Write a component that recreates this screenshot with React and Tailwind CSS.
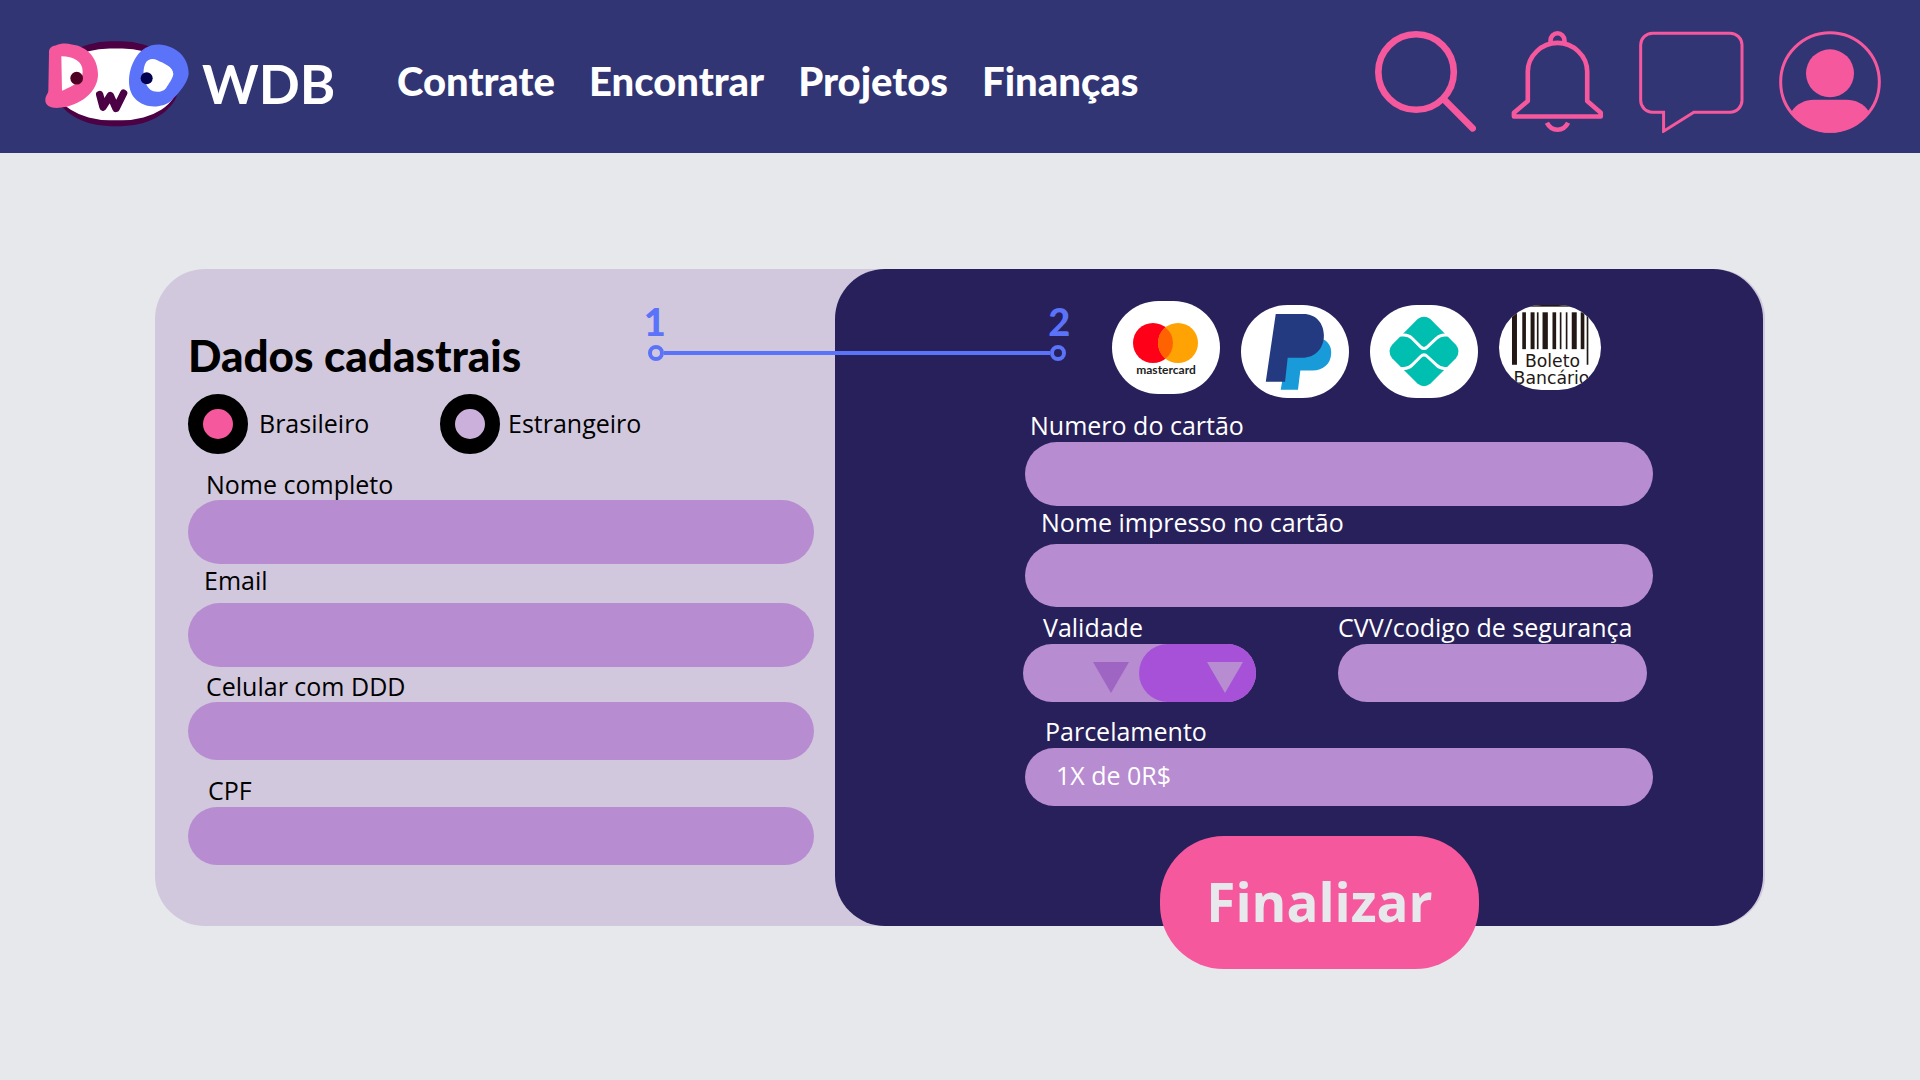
import React from "react";

const INPUT =
  "block w-full rounded-full border-0 bg-[#b78cd1] px-8 text-[25px] outline-none focus:ring-2 focus:ring-[#5a73f8]";

function LogoMark() {
  return (
    <svg viewBox="45 60 435 260" className="h-[87px] w-[145px] shrink-0" aria-hidden="true">
      <rect x="68" y="63" width="380" height="255" rx="175" ry="127" fill="#4b0143" />
      <rect x="74" y="85" width="368" height="215" rx="165" ry="107" fill="#fff" />
      <path fill="#fff" d="M80 100H150L170 140V190L90 220H80Z" />
      <path
        fillRule="evenodd"
        fill="#f6589d"
        d="M57 98C57 84 63 78 77 76C95 68 112 70 125 73C172 78 204 115 204 163C204 215 150 258 88 263C62 265 46 256 46 240C46 227 54 222 55 212ZM94 108C132 108 158 124 158 153C158 186 128 196 96 212Z"
      />
      <circle cx="140" cy="174" r="19" fill="#4f0025" />
      <path
        fillRule="evenodd"
        fill="#5a73f8"
        d="M390 73C440 78 476 112 476 160C474 190 440 226 425 240C400 264 345 268 315 235C288 205 293 148 320 108C335 86 360 71 390 73ZM345 132C352 116 368 113 382 120C400 129 430 138 430 162C426 180 416 190 408 204C396 218 372 217 361 209C340 190 336 155 345 132Z"
      />
      <circle cx="350" cy="174" r="18" fill="#02004f" />
      <path
        d="M209 223L219 261L241 226L258 265L281 219"
        fill="none"
        stroke="#4b0143"
        strokeWidth="22"
        strokeLinecap="round"
        strokeLinejoin="round"
      />
    </svg>
  );
}

function SearchIcon() {
  return (
    <svg viewBox="47 32 305 305" className="h-[101px] w-[101px]" fill="none" stroke="#f6589d" strokeWidth="20" aria-hidden="true">
      <circle cx="171" cy="156" r="114" />
      <path d="M256 239L342 326" strokeLinecap="round" />
    </svg>
  );
}

function BellIcon() {
  return (
    <svg viewBox="452 31 280 306" className="h-[101px] w-[93px]" fill="none" stroke="#f6589d" strokeWidth="14" aria-hidden="true">
      <path d="M571 66V59A21 21 0 0 1 613 59V66" />
      <path
        d="M592 67C544 67 502 106 502 154V243L460 279V290H723V279L682 243V154C682 106 640 67 592 67Z"
        strokeLinejoin="round"
      />
      <path d="M560 309C574 337 610 337 624 309" />
    </svg>
  );
}

function ChatIcon() {
  return (
    <svg viewBox="57 30 316 306" className="h-[102px] w-[105px]" fill="none" stroke="#f6589d" strokeWidth="9" aria-hidden="true">
      <path d="M98 36H331A36 36 0 0 1 367 72V237A36 36 0 0 1 331 274H222L131 331V274H98A36 36 0 0 1 62 237V72A36 36 0 0 1 98 36Z" />
    </svg>
  );
}

function AvatarIcon() {
  return (
    <svg viewBox="476 31 306 306" className="h-[102px] w-[102px]" aria-hidden="true">
      <circle cx="629" cy="184" r="148" fill="none" stroke="#f6589d" strokeWidth="9" />
      <circle cx="629" cy="158" r="72" fill="#f6589d" />
      <path d="M513 273C530 248 555 237 580 237H678C705 237 730 248 746 273C718 312 675 336 629 336C583 336 540 312 513 273Z" fill="#f6589d" />
    </svg>
  );
}

function MastercardLogo() {
  return (
    <svg viewBox="0 0 108 93" className="h-[93px] w-[108px]" aria-hidden="true">
      <circle cx="41" cy="42" r="20" fill="#ff0019" />
      <circle cx="66" cy="42" r="20" fill="#ffa203" />
      <path d="M53.5 26.4A20 20 0 0 1 53.5 57.6A20 20 0 0 1 53.5 26.4Z" fill="#ff6200" />
      <text x="54" y="73" textAnchor="middle" fontFamily="Lato, sans-serif" fontWeight="700" fontSize="12" fill="#222">
        mastercard
      </text>
    </svg>
  );
}

function PaypalLogo() {
  return (
    <svg viewBox="420 43 324 280" className="h-[93px] w-[108px]" aria-hidden="true">
      <path d="M566 140H650C678 146 692 164 691 188C690 220 667 240 635 240H598L591 298H539Z" fill="#189bd8" />
      <path d="M524 70H608C645 70 669 98 669 135C669 175 642 202 604 202H560L552 274H494Z" fill="#233a80" />
    </svg>
  );
}

function PixLogo() {
  return (
    <svg viewBox="34 44 324 280" className="h-[93px] w-[108px]" aria-hidden="true">
      <path
        d="M177 86Q196 72 215 86L292 164Q308 184 292 204L215 281Q196 296 177 281L100 204Q84 184 100 164Z"
        fill="#00beb0"
      />
      <path
        d="M112 134H136Q150 134 160 144L186 170Q196 180 206 170L234 144Q244 134 258 134H280M112 235H136Q150 235 160 225L186 199Q196 189 206 199L234 225Q244 235 258 235H280"
        fill="none"
        stroke="#fff"
        strokeWidth="9"
      />
    </svg>
  );
}

const BARS = [
  [453, 15, 158],
  [484, 11, 111],
  [509, 12, 111],
  [528, 5, 111],
  [545, 16, 111],
  [575, 11, 111],
  [597, 5, 111],
  [615, 5, 111],
  [633, 15, 111],
  [660, 11, 111],
  [678, 5, 158],
];

function BoletoLogo() {
  return (
    <svg viewBox="414 42 307 256" className="h-[85px] w-[102px]" aria-hidden="true">
      <rect x="414" y="42" width="307" height="5" fill="#231815" />
      {BARS.map(([x, w, h]) => (
        <rect key={x} x={x} y="64" width={w} height={h} fill="#231815" />
      ))}
      <text x="575" y="230" textAnchor="middle" fontFamily="DejaVu Sans, sans-serif" fontSize="52" fill="#231815">
        Boleto
      </text>
      <text x="572" y="279" textAnchor="middle" fontFamily="DejaVu Sans, sans-serif" fontSize="52" fill="#231815">
        Bancário
      </text>
    </svg>
  );
}

function Field({ id, label, className = "", labelClass = "", inputClass = "", type = "text" }) {
  return (
    <div className={className}>
      <label htmlFor={id} className={"block text-[25px] leading-8 " + labelClass}>
        {label}
      </label>
      <input id={id} type={type} className={INPUT + " " + inputClass} />
    </div>
  );
}

function Nationality({ value, label, gap, defaultChecked }) {
  return (
    <label className={"flex items-center text-[25px] leading-8 " + gap}>
      <input
        type="radio"
        name="nacionalidade"
        value={value}
        defaultChecked={defaultChecked}
        className="size-[60px] shrink-0 appearance-none rounded-full border-[15px] border-black bg-[#cbb0db] checked:bg-[#f6589d]"
      />
      <span className="pb-0.5">{label}</span>
    </label>
  );
}

function Payment({ name, className, children }) {
  return (
    <button type="button" aria-label={name} className={"shrink-0 overflow-hidden rounded-[48px] bg-white " + className}>
      {children}
    </button>
  );
}

function Triangle({ className }) {
  return (
    <svg viewBox="0 0 36 31" className={"pointer-events-none absolute top-[18px] h-[31px] w-9 " + className} aria-hidden="true">
      <path d="M0 0H36L18 31Z" fill="currentColor" />
    </svg>
  );
}

function Stepper() {
  return (
    <div className="absolute left-[30.6%] top-[31px] w-[26%] text-[#5a73f8]" aria-label="Etapas">
      <div className="-ml-1 -mr-1 flex justify-between pb-[3px] font-['Lato'] text-[38px] font-black leading-[42px]">
        <span>1</span>
        <span>2</span>
      </div>
      <div className="flex items-center">
        <span className="size-4 rounded-full border-4 border-[#5a73f8]" />
        <span className="h-1 flex-1 bg-[#5a73f8]" />
        <span className="size-4 rounded-full border-4 border-[#5a73f8]" />
      </div>
    </div>
  );
}

export default function App() {
  return (
    <div className="min-h-screen bg-[#e6e8eb] font-['Open_Sans',sans-serif] text-black">
      <header className="flex h-[153px] items-center bg-[#313574] pl-[45px] pr-[39px]">
        <a href="#inicio" className="flex items-center gap-3 pt-[14px] text-white">
          <LogoMark />
          <span className="w-[130px] font-['Lato',sans-serif] text-[54px] font-bold leading-[64px]">WDB</span>
        </a>
        <nav className="ml-[65px] flex gap-[34px] pt-2 font-['Lato',sans-serif] text-[40px] font-black leading-[48px] text-white">
          <a href="#contrate">Contrate</a>
          <a href="#encontrar">Encontrar</a>
          <a href="#projetos">Projetos</a>
          <a href="#financas">Finanças</a>
        </nav>
        <div className="ml-auto flex items-center gap-[35px] pt-[10px]">
          <button type="button" aria-label="Buscar">
            <SearchIcon />
          </button>
          <button type="button" aria-label="Notificações">
            <BellIcon />
          </button>
          <button type="button" aria-label="Mensagens">
            <ChatIcon />
          </button>
          <button type="button" aria-label="Perfil">
            <AvatarIcon />
          </button>
        </div>
      </header>

      <main className="px-[155px] pb-[110px] pt-[116px]">
        <form
          onSubmit={(e) => e.preventDefault()}
          className="relative grid grid-cols-[680fr_928fr] rounded-[50px] bg-[#d1c8dd] pr-0.5"
        >
          <section className="pb-[61px] pl-[33px] pr-[21px] pt-[58px]">
            <h1 className="font-['Lato',sans-serif] text-[44px] font-black leading-[56px]">Dados cadastrais</h1>
            <div className="mt-[11px] flex">
              <div className="w-[252px]">
                <Nationality value="brasileiro" label="Brasileiro" gap="gap-[11px]" defaultChecked />
              </div>
              <Nationality value="estrangeiro" label="Estrangeiro" gap="gap-2" />
            </div>
            <Field id="nome" label="Nome completo" className="mt-[14px]" labelClass="pl-[18px]" inputClass="h-16" />
            <Field id="email" type="email" label="Email" labelClass="mb-[7px] pl-4" inputClass="h-16" />
            <Field id="celular" type="tel" label="Celular com DDD" className="mt-[3px]" labelClass="pl-[18px]" inputClass="h-[58px]" />
            <Field id="cpf" label="CPF" className="mt-[14px]" labelClass="mb-px pl-5" inputClass="h-[58px]" />
          </section>

          <section className="rounded-[50px] bg-[#28205a] pl-[190px] pr-[110px] pt-8 text-white">
            <div className="flex gap-[21px] pl-[87px]">
              <Payment name="Mastercard" className="h-[93px]">
                <MastercardLogo />
              </Payment>
              <Payment name="PayPal" className="mt-1 h-[93px]">
                <PaypalLogo />
              </Payment>
              <Payment name="Pix" className="mt-1 h-[93px]">
                <PixLogo />
              </Payment>
              <Payment name="Boleto Bancário" className="mt-1 h-[85px]">
                <BoletoLogo />
              </Payment>
            </div>
            <Field id="cartao" label="Numero do cartão" className="mt-[11px]" labelClass="mb-px pl-[5px]" inputClass="h-16" />
            <Field id="titular" label="Nome impresso no cartão" labelClass="mb-[6px] pl-4" inputClass="h-[63px]" />
            <div className="mt-1 flex justify-between">
              <fieldset className="-ml-0.5">
                <legend className="mb-px pl-5 text-[25px] leading-8">Validade</legend>
                <div className="flex w-[233px] rounded-full bg-[#b78cd1]">
                  <div className="relative flex-1 text-[#9f65c2]">
                    <select aria-label="Mês de validade" className="h-[58px] w-full appearance-none rounded-full bg-transparent pl-6 text-[25px] text-white">
                      <option value=""></option>
                    </select>
                    <Triangle className="right-[10px]" />
                  </div>
                  <div className="relative w-[117px] text-[#b78cd1]">
                    <select aria-label="Ano de validade" className="h-[58px] w-full appearance-none rounded-full bg-[#a651d8] pl-6 text-[25px] text-white">
                      <option value=""></option>
                    </select>
                    <Triangle className="right-[13px]" />
                  </div>
                </div>
              </fieldset>
              <Field id="cvv" label="CVV/codigo de segurança" className="mr-[6px] w-[309px]" labelClass="mb-px whitespace-nowrap" inputClass="h-[58px]" />
            </div>
            <div className="mt-[13px]">
              <label htmlFor="parcelas" className="mb-px block pl-5 text-[25px] leading-8">
                Parcelamento
              </label>
              <select id="parcelas" className="block h-[58px] w-full appearance-none rounded-full bg-[#b78cd1] pb-0.5 pl-[31px] text-[25px] text-white">
                <option>1X de 0R$</option>
              </select>
            </div>
            <button
              type="submit"
              className="-mb-[43px] ml-[135px] mt-[30px] block h-[133px] w-[319px] rounded-[64px] bg-[#f6589d] pb-0.5 text-[53px] font-bold text-[#e6e8eb]"
            >
              Finalizar
            </button>
          </section>
          <Stepper />
        </form>
      </main>
    </div>
  );
}
